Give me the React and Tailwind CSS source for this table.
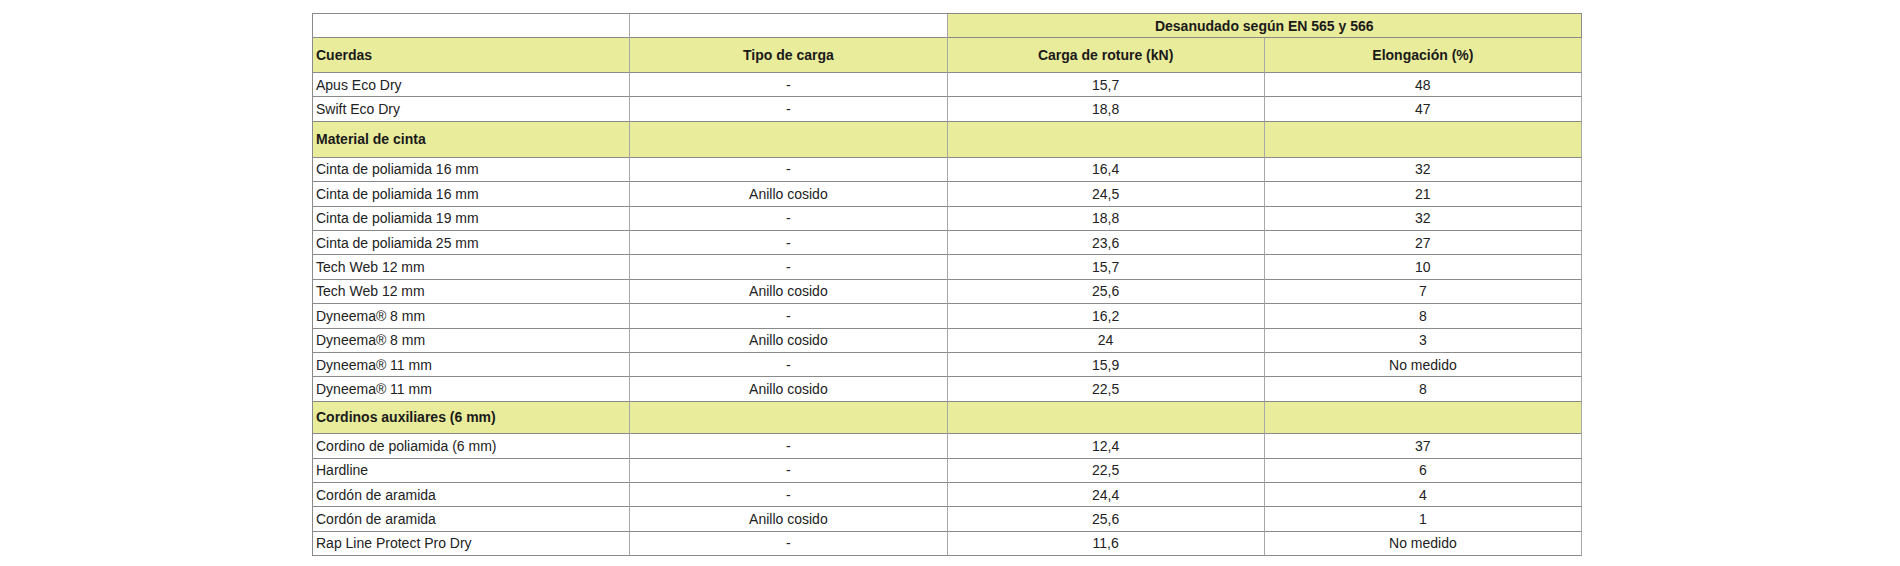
import React from 'react';

const rows = [
  { type: 'head', cells: ['Cuerdas', 'Tipo de carga', 'Carga de roture (kN)', 'Elongación (%)'] },
  { cells: ['Apus Eco Dry', '-', '15,7', '48'] },
  { cells: ['Swift Eco Dry', '-', '18,8', '47'] },
  { type: 'section', cells: ['Material de cinta', '', '', ''], h: 'h-[36px]' },
  { cells: ['Cinta de poliamida 16 mm', '-', '16,4', '32'] },
  { cells: ['Cinta de poliamida 16 mm', 'Anillo cosido', '24,5', '21'] },
  { cells: ['Cinta de poliamida 19 mm', '-', '18,8', '32'] },
  { cells: ['Cinta de poliamida 25 mm', '-', '23,6', '27'] },
  { cells: ['Tech Web 12 mm', '-', '15,7', '10'] },
  { cells: ['Tech Web 12 mm', 'Anillo cosido', '25,6', '7'] },
  { cells: ['Dyneema® 8 mm', '-', '16,2', '8'] },
  { cells: ['Dyneema® 8 mm', 'Anillo cosido', '24', '3'] },
  { cells: ['Dyneema® 11 mm', '-', '15,9', 'No medido'] },
  { cells: ['Dyneema® 11 mm', 'Anillo cosido', '22,5', '8'] },
  { type: 'section', cells: ['Cordinos auxiliares (6 mm)', '', '', ''], h: 'h-[32.5px]' },
  { cells: ['Cordino de poliamida (6 mm)', '-', '12,4', '37'] },
  { cells: ['Hardline', '-', '22,5', '6'] },
  { cells: ['Cordón de aramida', '-', '24,4', '4'] },
  { cells: ['Cordón de aramida', 'Anillo cosido', '25,6', '1'] },
  { cells: ['Rap Line Protect Pro Dry', '-', '11,6', 'No medido'] },
];

const Row = ({ row }) => {
  const yellow = row.type === 'head' || row.type === 'section';
  const height = row.type === 'head' ? 'h-[35px]' : row.h || 'h-[24.4px]';
  return (
    <div className={`grid grid-cols-4 ${height} ${yellow ? 'bg-[#e9ec9b] font-bold text-[#1a1a1a]' : 'bg-white text-[#222]'}`}>
      {row.cells.map((c, i) => (
        <div
          key={i}
          className={`flex items-center border-b border-r border-b-[#8a8a8a] border-r-[#a8a8a8] ${i === 0 ? 'justify-start pl-[3px]' : 'justify-center'} ${i === 3 ? 'border-r-[#8a8a8a]' : ''}`}
        >
          {c}
        </div>
      ))}
    </div>
  );
};

export default function App() {
  return (
    <div className="min-h-[566px] bg-white pt-[13px] pl-[312px] font-['Liberation_Sans',Arial,sans-serif] text-[14px] leading-none">
      <div className="w-[1270px] border-t border-l border-[#8a8a8a]">
        <div className="grid grid-cols-4 h-[24px]">
          <div className="border-b border-r border-b-[#8a8a8a] border-r-[#a8a8a8] bg-white" />
          <div className="border-b border-r border-b-[#8a8a8a] border-r-[#a8a8a8] bg-white" />
          <div className="col-span-2 flex items-center justify-center border-b border-r border-[#8a8a8a] bg-[#e9ec9b] font-bold text-[#1a1a1a]">
            Desanudado según EN 565 y 566
          </div>
        </div>
        {rows.map((r, i) => (
          <Row key={i} row={r} />
        ))}
      </div>
    </div>
  );
}
